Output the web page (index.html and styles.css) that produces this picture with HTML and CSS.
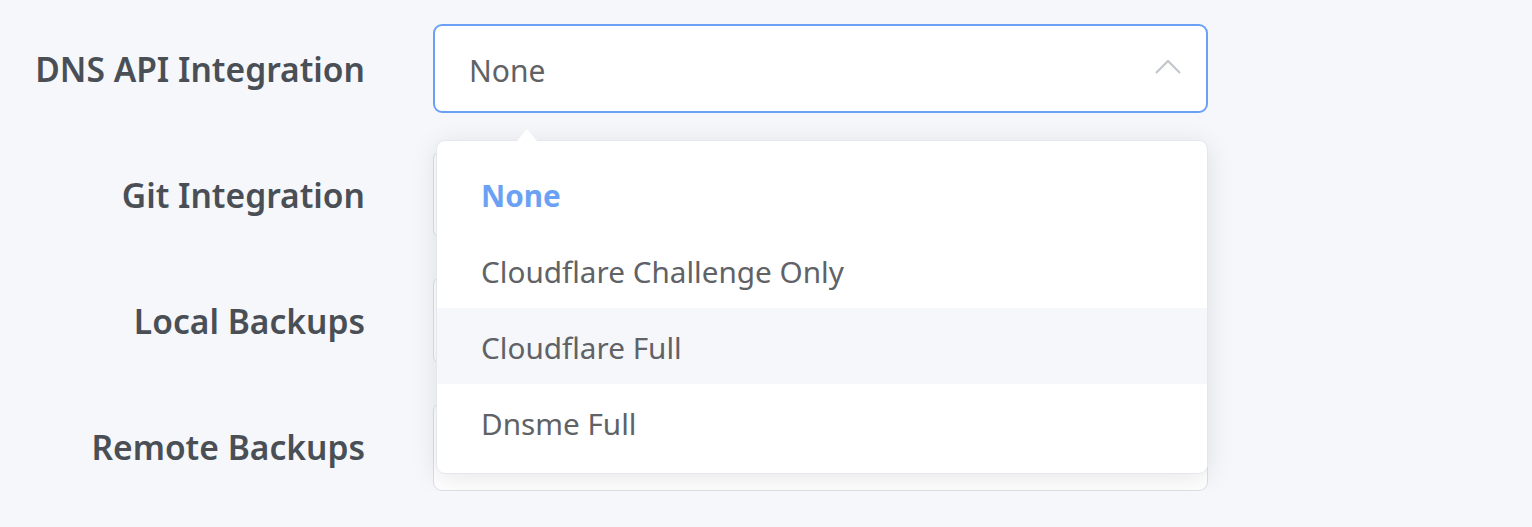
FILE: index.html
```html
<!DOCTYPE html>
<html lang="en">
<head>
  <meta charset="UTF-8" />
  <title>Integrations</title>
  <link rel="stylesheet" href="styles.css">
</head>
<body>
  <form class="settings">
    <div class="row">
      <label class="label">DNS API Integration</label>
      <div class="select is-focus">
        <span class="value">None</span>
        <svg class="arrow" width="26" height="16" viewBox="0 0 26 16"><path d="M1 14 L13 2 L25 14" fill="none" stroke="#c0c4cc" stroke-width="2"/></svg>

        <div class="dropdown">
          <span class="popper-arrow"></span>
          <ul class="options">
            <li class="option selected">None</li>
            <li class="option">Cloudflare Challenge Only</li>
            <li class="option hover">Cloudflare Full</li>
            <li class="option">Dnsme Full</li>
          </ul>
        </div>
      </div>
    </div>
    <div class="row">
      <label class="label">Git Integration</label>
      <div class="select"></div>
    </div>
    <div class="row">
      <label class="label">Local Backups</label>
      <div class="select"></div>
    </div>
    <div class="row">
      <label class="label">Remote Backups</label>
      <div class="select"></div>
    </div>
  </form>
</body>
</html>
```

FILE: styles.css
```css
* { box-sizing: border-box; }
body {
  margin: 0;
  background: #f5f7fa;
  font-family: 'Noto Sans', 'Open Sans', sans-serif;
  color: #606266;
}

.settings {
  padding-top: 24px;
  display: flex;
  flex-direction: column;
  gap: 37px;
}

.row {
  display: flex;
  align-items: center;
  height: 89px;
}

.label {
  width: 365px;
  text-align: right;
  margin-right: 68px;
  font-size: 33.6px;
  font-weight: 600;
  color: #4a4f56;
}

.select {
  position: relative;
  width: 775px;
  height: 89px;
  background: #fff;
  border: 1px solid #dcdfe6;
  border-radius: 9px;
  display: flex;
  align-items: center;
  padding: 0 25px 0 34px;
}
.select.is-focus { border: 2px solid #6ba1f5; z-index: 2; }

.value { flex: 1; font-size: 30px; color: #606266; padding-top: 4px; }
.arrow { margin-top: -4px; }

.dropdown {
  position: absolute;
  top: 114px;
  left: 1px;
  width: 772px;
  background: #fff;
  border: 1px solid #e4e7ed;
  border-radius: 9px;
  box-shadow: 0 4px 27px rgba(0, 0, 0, 0.1);
}

.popper-arrow {
  position: absolute;
  top: -12px;
  left: 80px;
  width: 0;
  height: 0;
  border-left: 10px solid transparent;
  border-right: 10px solid transparent;
  border-bottom: 12px solid #fff;
}

.options {
  list-style: none;
  margin: 0;
  padding: 15px 0 13px;
}

.option {
  height: 76px;
  padding: 4px 44px 0;
  line-height: 72px;
  font-size: 29.7px;
  color: #606266;
}
.option.hover { background: #f5f7fa; }
.option.selected { color: #6ba1f5; font-weight: 700; }
```
